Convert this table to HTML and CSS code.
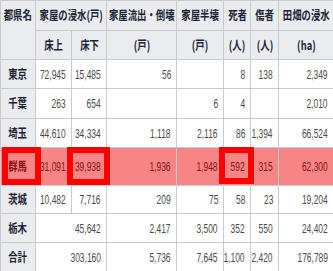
FILE: index.html
```html
<!DOCTYPE html>
<html lang="ja">
<head>
<meta charset="utf-8">
<link rel="stylesheet" href="styles.css">
</head>
<body>
<div class="wrap">
<table class="tbl">
<colgroup>
<col class="w35"><col class="w36"><col class="w35"><col class="w70"><col class="w47"><col class="w27"><col class="w28"><col class="w55">
</colgroup>
<thead>
<tr class="h30">
<th rowspan="2" class="pref"><div class="c top"><span class="j">都県名</span></div></th>
<th colspan="2"><div class="c"><span class="j">家屋の浸水(戸)</span></div></th>
<th><div class="c"><span class="j">家屋流出・倒壊</span></div></th>
<th><div class="c"><span class="j">家屋半壊</span></div></th>
<th><div class="c"><span class="j">死者</span></div></th>
<th><div class="c"><span class="j">傷者</span></div></th>
<th><div class="c"><span class="j">田畑の浸水</span></div></th>
</tr>
<tr class="h29">
<th><div class="c"><span class="j">床上</span></div></th>
<th><div class="c"><span class="j">床下</span></div></th>
<th><div class="c"><span class="j">(戸)</span></div></th>
<th><div class="c"><span class="j">(戸)</span></div></th>
<th><div class="c"><span class="j">(人)</span></div></th>
<th><div class="c"><span class="j">(人)</span></div></th>
<th><div class="c"><span class="j">(ha)</span></div></th>
</tr>
</thead>
<tbody>
<tr class="h29">
<th><div class="c"><span class="j">東京</span></div></th>
<td><div class="r"><span class="n">72,945</span></div></td>
<td><div class="r"><span class="n">15,485</span></div></td>
<td><div class="r"><span class="n">56</span></div></td>
<td></td>
<td><div class="r"><span class="n">8</span></div></td>
<td><div class="r"><span class="n">138</span></div></td>
<td><div class="r"><span class="n">2,349</span></div></td>
</tr>
<tr class="h30">
<th><div class="c"><span class="j">千葉</span></div></th>
<td><div class="r"><span class="n">263</span></div></td>
<td><div class="r"><span class="n">654</span></div></td>
<td></td>
<td><div class="r"><span class="n">6</span></div></td>
<td><div class="r"><span class="n">4</span></div></td>
<td></td>
<td><div class="r"><span class="n">2,010</span></div></td>
</tr>
<tr class="h29">
<th><div class="c"><span class="j">埼玉</span></div></th>
<td><div class="r"><span class="n">44,610</span></div></td>
<td><div class="r"><span class="n">34,334</span></div></td>
<td><div class="r"><span class="n">1,118</span></div></td>
<td><div class="r"><span class="n">2,116</span></div></td>
<td><div class="r"><span class="n">86</span></div></td>
<td><div class="r"><span class="n">1,394</span></div></td>
<td><div class="r"><span class="n">66,524</span></div></td>
</tr>
<tr class="h38 hl">
<th><div class="c"><span class="j">群馬</span></div></th>
<td><div class="r"><span class="n">31,091</span></div></td>
<td><div class="r"><span class="n">39,938</span></div></td>
<td><div class="r"><span class="n">1,936</span></div></td>
<td><div class="r"><span class="n">1,948</span></div></td>
<td><div class="r"><span class="n">592</span></div></td>
<td><div class="r"><span class="n">315</span></div></td>
<td><div class="r"><span class="n">62,300</span></div></td>
</tr>
<tr class="h28">
<th><div class="c"><span class="j">茨城</span></div></th>
<td><div class="r"><span class="n">10,482</span></div></td>
<td><div class="r"><span class="n">7,716</span></div></td>
<td><div class="r"><span class="n">209</span></div></td>
<td><div class="r"><span class="n">75</span></div></td>
<td><div class="r"><span class="n">58</span></div></td>
<td><div class="r"><span class="n">23</span></div></td>
<td><div class="r"><span class="n">19,204</span></div></td>
</tr>
<tr class="h29">
<th><div class="c"><span class="j">栃木</span></div></th>
<td colspan="2"><div class="r"><span class="n">45,642</span></div></td>
<td><div class="r"><span class="n">2,417</span></div></td>
<td><div class="r"><span class="n">3,500</span></div></td>
<td><div class="r"><span class="n">352</span></div></td>
<td><div class="r"><span class="n">550</span></div></td>
<td><div class="r"><span class="n">24,402</span></div></td>
</tr>
<tr class="h29">
<th><div class="c"><span class="j">合計</span></div></th>
<td colspan="2"><div class="r"><span class="n">303,160</span></div></td>
<td><div class="r"><span class="n">5,736</span></div></td>
<td><div class="r"><span class="n">7,645</span></div></td>
<td><div class="r"><span class="n">1,100</span></div></td>
<td><div class="r"><span class="n">2,420</span></div></td>
<td><div class="r"><span class="n">176,789</span></div></td>
</tr>
</tbody>
</table>
<div class="mark m1"></div>
<div class="mark m2"></div>
<div class="mark m3"></div>
</div>
</body>
</html>
```
FILE: styles.css
```css
body {
  margin: 0;
  background: #ffffff;
}
.wrap {
  position: relative;
  width: 333px;
  height: 271px;
  overflow: hidden;
}
.tbl {
  border-collapse: collapse;
  table-layout: fixed;
  width: 333px;
  font-family: "Noto Sans CJK JP", sans-serif;
}
.w35 { width: 35px; }
.w36 { width: 36px; }
.w70 { width: 70px; }
.w47 { width: 47px; }
.w27 { width: 27px; }
.w28 { width: 28px; }
.w55 { width: 55px; }
.h28 { height: 28px; }
.h29 { height: 29px; }
.h30 { height: 30px; }
.h38 { height: 38px; }
.tbl th,
.tbl td {
  border: 1px solid #c8ccd1;
  padding: 0;
  white-space: nowrap;
  overflow: visible;
}
.tbl th {
  background: #eaecf0;
  font-weight: normal;
  color: #1c2436;
}
.tbl td {
  background: #ffffff;
  padding-right: 5px;
}
.pref {
  vertical-align: top;
}
.c {
  display: flex;
  justify-content: center;
  align-items: center;
}
.c.top {
  height: 29px;
}
.r {
  display: flex;
  justify-content: flex-end;
  align-items: center;
}
.j {
  display: inline-block;
  font-size: 12.5px;
  font-weight: 700;
  line-height: 1;
  transform: scaleX(0.75);
  transform-origin: center center;
}
.n {
  display: inline-block;
  flex: none;
  font-family: "Liberation Sans", sans-serif;
  font-size: 13px;
  line-height: 1;
  color: #4a4a4a;
  transform: scaleX(0.65);
  transform-origin: right center;
}
.hl th,
.hl td {
  background: #f88585;
}
.hl .j,
.hl .n {
  color: #8b1010;
}
.mark {
  position: absolute;
  top: 147px;
  height: 38px;
  border: 6px solid #ff0000;
  box-sizing: border-box;
}
.m1 { left: 2px; width: 39px; }
.m2 { left: 67px; width: 43px; }
.m3 { left: 219px; width: 35px; height: 37px; }
```
